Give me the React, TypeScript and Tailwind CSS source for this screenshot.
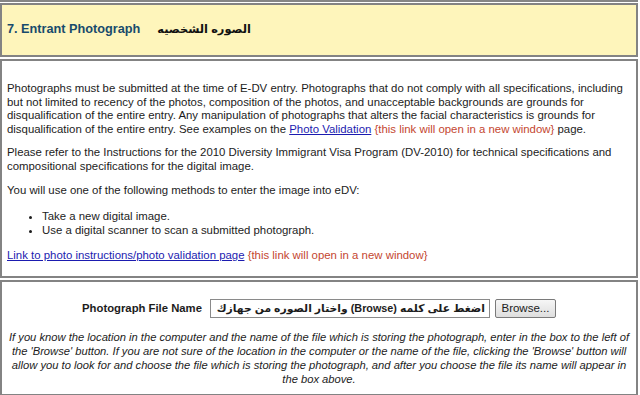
export default function App() {
  const font = "font-['Liberation_Sans','DejaVu_Sans',Arial,sans-serif]";
  return (
    <main className={`w-[640px] h-[395px] overflow-hidden bg-white text-[11.4px] text-[#1c1c1c] ${font}`}>
      <div className="w-[638px] h-[2px] bg-[#858585]" />
      <div className="flex w-[638px] flex-col gap-[2px] pt-px">
        <section className="flex h-[54px] items-center border-2 border-[#838383] bg-[#fef5bb] pl-[5px]">
          <h1 className="text-[12.7px] font-bold text-[#184b6c]">7. Entrant Photograph</h1>
          <span dir="rtl" className="ml-[17px] text-[11.4px] font-bold text-[#111]">
            الصوره الشخصيه
          </span>
        </section>

        <section className="h-[219px] border-2 border-[#838383] bg-white pl-[5px] pr-[3px] pt-[21px] leading-[13.6px]">
          <p>
            Photographs must be submitted at the time of E-DV entry. Photographs that do not comply with all
            specifications, including but not limited to recency of the photos, composition of the photos, and
            unacceptable backgrounds are grounds for disqualification of the entire entry. Any manipulation of
            photographs that alters the facial characteristics is grounds for disqualification of the entire entry.
            See examples on the{" "}
            <a href="#" className="text-[#1b1bb0] underline">
              Photo Validation
            </a>{" "}
            <span className="text-[#c4462f]">{"{this link will open in a new window}"}</span> page.
          </p>
          <p className="mt-[10px]">
            Please refer to the Instructions for the 2010 Diversity Immigrant Visa Program (DV-2010) for technical
            specifications and compositional specifications for the digital image.
          </p>
          <p className="mt-[10px]">You will use one of the following methods to enter the image into eDV:</p>
          <ul className="mt-[13px] list-disc pl-[35px]">
            <li>Take a new digital image.</li>
            <li>Use a digital scanner to scan a submitted photograph.</li>
          </ul>
          <p className="mt-[12px]">
            <a href="#" className="text-[#1b1bb0] underline">
              Link to photo instructions/photo validation page
            </a>{" "}
            <span className="text-[#c4462f]">{"{this link will open in a new window}"}</span>
          </p>
        </section>

        <section className="h-[116px] border-2 border-[#838383] bg-white px-px pt-[17px]">
          <div className="flex items-center justify-center">
            <label className="text-[11.3px] font-bold">Photograph File Name</label>
            <div
              dir="rtl"
              className="ml-[8px] flex h-[19px] w-[280px] items-center overflow-hidden whitespace-nowrap border border-[#8a8a8a] bg-white px-[4px] text-[10.8px] font-bold"
            >
              اضغط على كلمه (Browse) واختار الصوره من جهازك
            </div>
            <button className="ml-[5px] h-[19px] w-[61px] rounded-[2px] border border-[#7a7a7a] bg-gradient-to-b from-[#f6f6f6] to-[#dedede] text-[11.5px] text-[#222]">
              Browse...
            </button>
          </div>
          <p className="mt-[12px] text-center text-[11.2px] italic leading-[14px]">
            If you know the location in the computer and the name of the file which is storing the photograph, enter in
            the box to the left of the 'Browse' button. If you are not sure of the location in the computer or the name
            of the file, clicking the 'Browse' button will allow you to look for and choose the file which is storing
            the photograph, and after you choose the file its name will appear in the box above.
          </p>
        </section>
      </div>
    </main>
  );
}
